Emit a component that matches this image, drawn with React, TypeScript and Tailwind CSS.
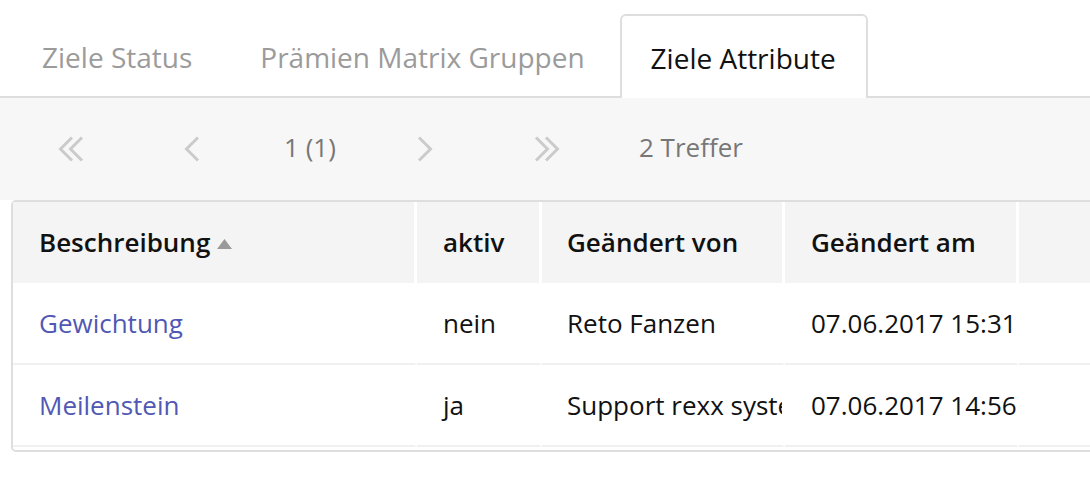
import React from "react";

const font = { fontFamily: '"Open Sans", "Noto Sans", sans-serif' };

function ChevLeft() {
  return (
    <svg width="16" height="26" viewBox="0 0 16 26" fill="none">
      <polyline points="14,1.5 2.5,13 14,24.5" stroke="#cbcbcb" strokeWidth="3" />
    </svg>
  );
}
function ChevRight() {
  return (
    <svg width="16" height="26" viewBox="0 0 16 26" fill="none">
      <polyline points="2,1.5 13.5,13 2,24.5" stroke="#cbcbcb" strokeWidth="3" />
    </svg>
  );
}
function DblLeft() {
  return (
    <svg width="26" height="26" viewBox="0 0 26 26" fill="none">
      <polyline points="14,1.5 2.5,13 14,24.5" stroke="#cbcbcb" strokeWidth="3" />
      <polyline points="24,1.5 12.5,13 24,24.5" stroke="#cbcbcb" strokeWidth="3" />
    </svg>
  );
}
function DblRight() {
  return (
    <svg width="26" height="26" viewBox="0 0 26 26" fill="none">
      <polyline points="2,1.5 13.5,13 2,24.5" stroke="#cbcbcb" strokeWidth="3" />
      <polyline points="12,1.5 23.5,13 12,24.5" stroke="#cbcbcb" strokeWidth="3" />
    </svg>
  );
}

const rows = [
  ["Gewichtung", "nein", "Reto Fanzen", "07.06.2017 15:31"],
  ["Meilenstein", "ja", "Support rexx systems", "07.06.2017 14:56"],
];

export default function App() {
  return (
    <div className="w-[1090px] h-[480px] overflow-hidden bg-white" style={font}>
      {/* Tabs */}
      <div className="flex items-end h-[98px] pl-[12px] gap-[8px] border-b-2 border-[#dedede]">
        <div className="h-[84px] -mb-[2px] pt-[2px] px-[28px] border-2 border-transparent flex items-center text-[28px] text-[#9b9b9b]">
          Ziele Status
        </div>
        <div className="h-[84px] -mb-[2px] pt-[2px] pl-[28px] pr-[25px] border-2 border-transparent flex items-center text-[28px] text-[#9b9b9b]">
          Prämien Matrix Gruppen
        </div>
        <div className="h-[84px] -mb-[2px] pt-[2px] pl-[29px] pr-[30px] border-2 border-b-0 border-[#dedede] rounded-t-[6px] bg-white flex items-center text-[28px] text-[#111]">
          Ziele Attribute
        </div>
      </div>

      {/* Toolbar */}
      <div className="h-[102px] pb-[3px] bg-[#f7f7f7] flex items-center pl-[11px] text-[26px] text-[#777]">
        <div className="w-[120px] flex justify-center pt-[3px]"><DblLeft /></div>
        <div className="w-[122px] flex justify-center pt-[3px]"><ChevLeft /></div>
        <div className="w-[114px] flex justify-center">1 (1)</div>
        <div className="w-[116px] flex justify-center pt-[3px]"><ChevRight /></div>
        <div className="w-[128px] flex justify-center pt-[3px]"><DblRight /></div>
        <div className="ml-[28px]">2 Treffer</div>
      </div>

      {/* Table */}
      <div className="ml-[11px] w-[1100px] border-2 border-[#dedede] rounded-[5px] pb-[3px] text-[26px]">
        <div className="flex h-[81px] bg-[#f4f4f4] font-semibold text-[#111]">
          <div className="w-[404px] shrink-0 pl-[26px] flex items-center border-r-[3px] border-white">
            Beschreibung
            <svg width="15" height="10" viewBox="0 0 15 10" className="ml-[7px] mt-[2px]">
              <polygon points="7.5,0 15,10 0,10" fill="#9a9a9a" />
            </svg>
          </div>
          <div className="w-[125px] shrink-0 pl-[26px] flex items-center border-r-[3px] border-white">aktiv</div>
          <div className="w-[243px] shrink-0 pl-[25px] flex items-center border-r-[3px] border-white">Geändert von</div>
          <div className="w-[234px] shrink-0 pl-[26px] flex items-center border-r-[3px] border-white">Geändert am</div>
          <div className="flex-1"></div>
        </div>
        {rows.map((r) => (
          <div key={r[0]} className="flex h-[82px] text-[#111]">
            <div className="w-[404px] shrink-0 pl-[26px] flex items-center border-r-[3px] border-r-white border-b-2 border-b-[#f0f0f0] text-[#5058b4]">
              {r[0]}
            </div>
            <div className="w-[125px] shrink-0 pl-[26px] flex items-center border-r-[3px] border-r-white border-b-2 border-b-[#f0f0f0]">
              {r[1]}
            </div>
            <div className="w-[243px] shrink-0 pl-[25px] flex items-center border-r-[3px] border-r-white border-b-2 border-b-[#f0f0f0] overflow-hidden whitespace-nowrap">
              {r[2]}
            </div>
            <div className="w-[234px] shrink-0 pl-[26px] flex items-center border-r-[3px] border-r-white border-b-2 border-b-[#f0f0f0] overflow-hidden whitespace-nowrap">
              {r[3]}
            </div>
            <div className="flex-1 border-b-2 border-b-[#f0f0f0]"></div>
          </div>
        ))}
      </div>
    </div>
  );
}
